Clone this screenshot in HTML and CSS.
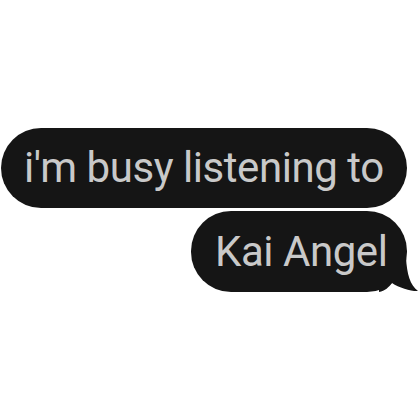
FILE: index.html
```html
<!DOCTYPE html>
<html>
<head>
<meta charset="utf-8">
<link rel="stylesheet" href="styles.css">
</head>
<body>
<div class="chat">
  <div class="bubble first"><span class="txt">i'm busy listening to</span></div>
  <div class="bubble second">
    <svg class="tail" width="40" height="42" viewBox="0 0 40 42"><path d="M27,0 L27,8 C28,24 31,35 39,41 C33,41.5 20,38 13,33 C10,37 6,41 0,42 L0,0 Z" fill="#151515"/></svg>
    <span class="txt">Kai Angel</span>
  </div>
</div>
</body>
</html>
```
FILE: styles.css
```css
html, body {
  margin: 0;
  padding: 0;
  background: #ffffff;
}
.chat {
  width: 420px;
  height: 420px;
  box-sizing: border-box;
  padding: 128px 13px 0 1px;
  display: flex;
  flex-direction: column;
  gap: 3px;
}
.bubble {
  position: relative;
  background: #151515;
  color: #c9c9c9;
  font-family: Roboto, "Noto Sans", sans-serif;
  font-size: 42px;
  letter-spacing: -0.45px;
  height: 80px;
  line-height: 80px;
  border-radius: 40px;
  box-sizing: border-box;
  white-space: nowrap;
}
.txt {
  position: relative;
}
.first {
  align-self: flex-start;
  width: 406px;
  padding-left: 23px;
}
.second {
  align-self: flex-end;
  width: 216px;
  height: 81px;
  line-height: 81px;
  padding-left: 24px;
}
.tail {
  position: absolute;
  left: 188px;
  top: 39px;
  display: block;
}
```
